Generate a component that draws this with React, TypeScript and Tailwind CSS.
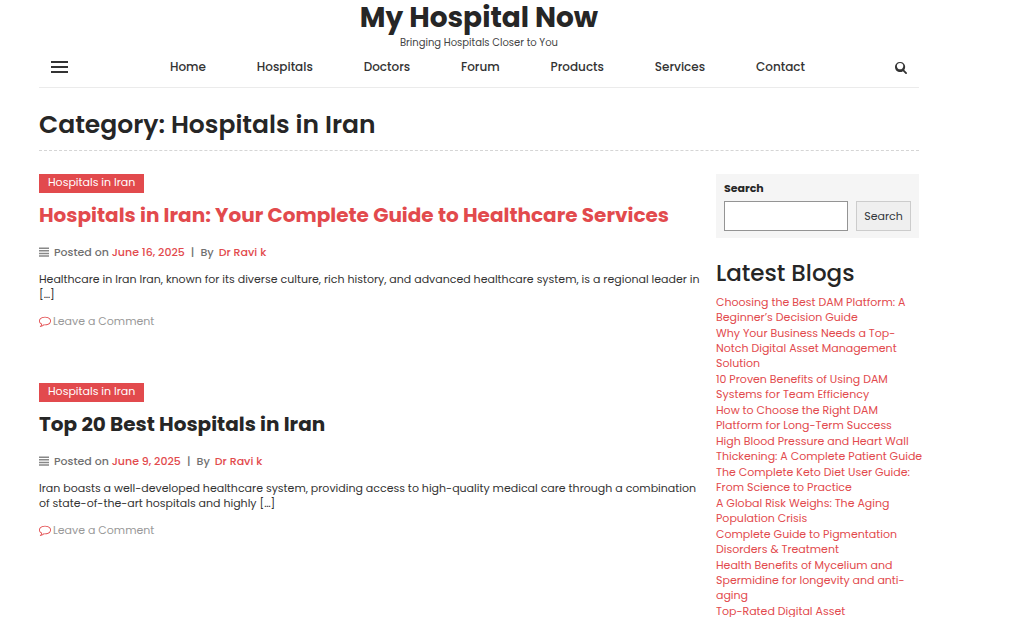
import type { ReactNode } from 'react'

const navItems = ['Home', 'Hospitals', 'Doctors', 'Forum', 'Products', 'Services', 'Contact']

const posts = [
  {
    title: 'Hospitals in Iran: Your Complete Guide to Healthcare Services',
    category: 'Hospitals in Iran',
    date: 'June 16, 2025',
    author: 'Dr Ravi k',
    excerpt:
      'Healthcare in Iran Iran, known for its diverse culture, rich history, and advanced healthcare system, is a regional leader in […]',
    active: true,
  },
  {
    title: 'Top 20 Best Hospitals in Iran',
    category: 'Hospitals in Iran',
    date: 'June 9, 2025',
    author: 'Dr Ravi k',
    excerpt:
      'Iran boasts a well-developed healthcare system, providing access to high-quality medical care through a combination of state-of-the-art hospitals and highly […]',
    active: false,
  },
]

const blogs = [
  'Choosing the Best DAM Platform: A Beginner’s Decision Guide',
  'Why Your Business Needs a Top-Notch Digital Asset Management Solution',
  '10 Proven Benefits of Using DAM Systems for Team Efficiency',
  'How to Choose the Right DAM Platform for Long-Term Success',
  'High Blood Pressure and Heart Wall Thickening: A Complete Patient Guide',
  'The Complete Keto Diet User Guide: From Science to Practice',
  'A Global Risk Weighs: The Aging Population Crisis',
  'Complete Guide to Pigmentation Disorders & Treatment',
  'Health Benefits of Mycelium and Spermidine for longevity and anti-aging',
  'Top-Rated Digital Asset',
]

function SearchIcon() {
  return (
    <svg viewBox="0 0 1664 1792" className="h-[13px] w-3 fill-current" aria-hidden="true">
      <path d="M1152 704q0-185-131.500-316.500t-316.500-131.500-316.500 131.500-131.500 316.500 131.500 316.500 316.500 131.500 316.500-131.500 131.500-316.500zM1664 1664q0 52-38 90t-90 38q-54 0-90-38l-343-342q-179 124-399 124-143 0-273.500-55.500t-225-150-150-225-55.500-273.500 55.500-273.500 150-225 225-150 273.500-55.500 273.500 55.500 225 150 150 225 55.500 273.500q0 220-124 399l343 343q37 37 37 90z" />
    </svg>
  )
}

function CommentIcon() {
  return (
    <svg viewBox="0 0 1792 1792" className="size-3 shrink-0 fill-[#e24a4d]" aria-hidden="true">
      <path d="M896 384q-204 0-381.500 69.500t-282 187.500-104.500 255q0 112 71.500 213.500t201.500 175.500l87 50-27 96q-24 91-70 172 152-63 275-171l43-38 57 6q69 8 130 8 204 0 381.500-69.500t282-187.500 104.500-255-104.500-255-282-187.500-381.500-69.500zM1792 896q0 174-120 321.500t-326 233-450 85.500q-70 0-145-8-198 175-460 242-49 14-114 22h-5q-15 0-27-10.500t-16-27.500v-1q-3-4-.5-12t2-10 4.500-9.500l6-9 7-8.500 8-9q7-8 31-34.500t34.500-38 31-39.500 32.500-51 27-59 26-76q-157-89-247.500-220t-90.500-281q0-174 120-321.500t326-233 450-85.500 450 85.500 326 233 120 321.500z" />
    </svg>
  )
}

function LinesIcon() {
  return (
    <svg viewBox="0 0 10 10" className="size-[10px] shrink-0 fill-[#888]" aria-hidden="true">
      <path d="M0 .4h10v1.500H0zM0 3h10v1.500H0zM0 5.700h10v1.500H0zM0 8.300h10v1.500H0z" />
    </svg>
  )
}

function RedLink({ children }: { children: ReactNode }) {
  return (
    <a href="#" className="text-[#e24a4d]">
      {children}
    </a>
  )
}

function Post({ post }: { post: (typeof posts)[number] }) {
  return (
    <article className="flex h-[209px] flex-col items-start">
      <a href="#" className="bg-[#e24a4d] px-[9px] pb-[3px] text-[11px] leading-4 text-white">
        {post.category}
      </a>
      <h2 className={`mt-2 text-xl leading-7 font-bold ${post.active ? 'text-[#e24a4d]' : 'text-[#262626]'}`}>
        <a href="#">{post.title}</a>
      </h2>
      <div className="mt-[15px] flex items-center text-[11px] leading-4 font-medium whitespace-pre text-[#707070]">
        <LinesIcon />
        <span className="ml-[5px]">Posted on </span>
        <RedLink>{post.date}</RedLink>
        <span className="mx-1.5">|</span>
        <span className="mr-[5px]">By</span>
        <RedLink>{post.author}</RedLink>
      </div>
      <p className="mt-3 text-[11px] leading-[15px] text-[#333]">{post.excerpt}</p>
      <a href="#" className="mt-[11px] flex items-center gap-0.5 text-[11px] leading-4 text-[#999]">
        <CommentIcon />
        Leave a Comment
      </a>
    </article>
  )
}

export default function App() {
  return (
    <div className="bg-white pr-[105px] pl-[39px] font-['Poppins','Inter',sans-serif] text-[#262626]">
      <header className="border-b border-[#ebebeb]">
        <div className="flex flex-col items-center">
          <h1 className="text-[28px] leading-[35px] font-bold">
            <a href="#">My Hospital Now</a>
          </h1>
          <p className="text-[10px] leading-4 text-[#444]">Bringing Hospitals Closer to You</p>
        </div>
        <div className="flex h-9 items-center pb-1 text-[#333]">
          <div className="w-[131px] shrink-0 pl-3">
            <button type="button" aria-label="Menu" className="flex w-[17px] flex-col gap-[3px]">
              <span className="h-0.5 w-full bg-[#333]" />
              <span className="h-0.5 w-full bg-[#333]" />
              <span className="h-0.5 w-full bg-[#333]" />
            </button>
          </div>
          <nav className="flex flex-1 justify-between text-xs leading-4 font-medium">
            {navItems.map((item) => (
              <a key={item} href="#">
                {item}
              </a>
            ))}
          </nav>
          <div className="flex w-[114px] shrink-0 justify-end pr-3">
            <button type="button" aria-label="Open search">
              <SearchIcon />
            </button>
          </div>
        </div>
      </header>

      <div className="border-b border-dashed border-[#d5d5d5] pt-5 pb-[9px]">
        <h1 className="text-[25px] leading-[33px] font-semibold">Category: Hospitals in Iran</h1>
      </div>

      <div className="flex gap-3.5 pt-[23px]">
        <main className="min-w-0 flex-1">
          {posts.map((post) => (
            <Post key={post.title} post={post} />
          ))}
        </main>

        <aside className="w-[203px] shrink-0">
          <form className="bg-[#f5f5f5] px-2 pt-1.5 pb-[7px]" onSubmit={(e) => e.preventDefault()}>
            <label htmlFor="search" className="block text-[11px] leading-4 font-bold">
              Search
            </label>
            <div className="mt-[5px] flex gap-2">
              <input
                id="search"
                type="search"
                className="h-[30px] w-[124px] border border-[#949494] bg-white px-2 text-[11px]"
              />
              <button
                type="submit"
                className="h-[30px] w-[55px] border border-[#ccc] bg-[#efefef] text-[11px] text-[#32373c]"
              >
                Search
              </button>
            </div>
          </form>

          <h2 className="mt-[19px] text-[23px] leading-8 font-medium">Latest Blogs</h2>
          <ul className="-mr-2 mt-1.5 text-[11px] leading-[15px]">
            {blogs.map((blog) => (
              <li key={blog} className="pb-px">
                <RedLink>{blog}</RedLink>
              </li>
            ))}
          </ul>
        </aside>
      </div>
    </div>
  )
}
